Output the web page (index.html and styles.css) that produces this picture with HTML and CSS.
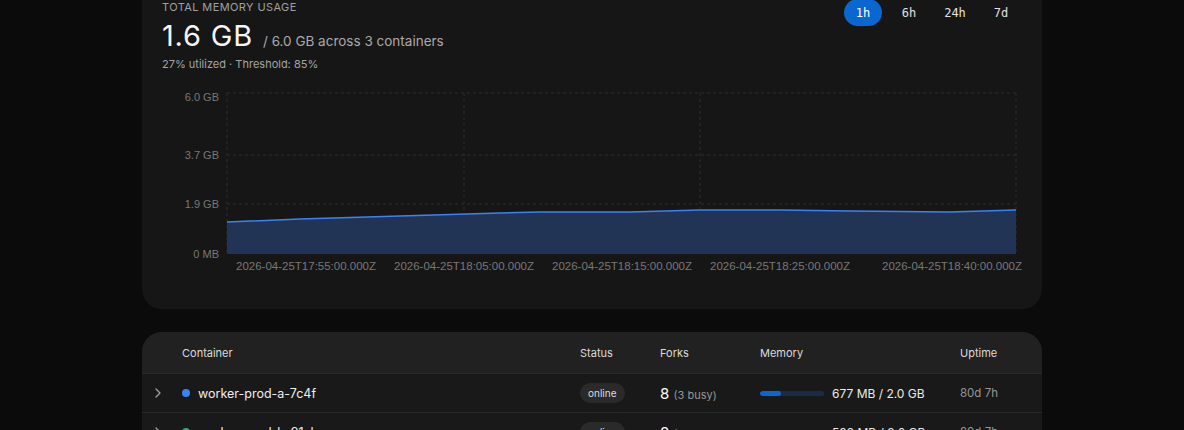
FILE: index.html
```html
<!doctype html>
<html>
	<head>
		<meta charset="utf-8">
		<title>Memory usage</title>
		<link rel="stylesheet" href="styles.css">
	</head>
	<body>
		<div class="page">
			<section class="card usage">
				<div class="usage-head">
					<div>
						<div class="eyebrow">Total memory usage</div>
						<div class="total"><span class="big">1.6 GB</span><span class="of">/ 6.0 GB across 3 containers</span></div>
						<div class="sub">27% utilized · Threshold: 85%</div>
					</div>
					<div class="ranges">
						<button class="range active">1h</button>
						<button class="range">6h</button>
						<button class="range">24h</button>
						<button class="range">7d</button>
					</div>
				</div>
				<svg class="chart" width="856" height="195" viewBox="0 0 856 195">
					<g class="grid">
						<line x1="63" y1="8" x2="852" y2="8" />
						<line x1="63" y1="70" x2="852" y2="70" />
						<line x1="63" y1="119" x2="852" y2="119" />
						<line x1="63" y1="8" x2="63" y2="169" />
						<line x1="300" y1="8" x2="300" y2="169" />
						<line x1="536" y1="8" x2="536" y2="169" />
						<line x1="852" y1="8" x2="852" y2="169" />
					</g>
					<path class="area" d="M63 137 L136 134 L236 131 L336 128 L376 127 L466 127 L536 125 L616 125 L686 126 L786 127 L852 125 L852 169 L63 169 Z" />
					<path class="line" d="M63 137 L136 134 L236 131 L336 128 L376 127 L466 127 L536 125 L616 125 L686 126 L786 127 L852 125" />
					<g class="ylabels">
						<text x="55" y="16">6.0 GB</text>
						<text x="55" y="74">3.7 GB</text>
						<text x="55" y="123">1.9 GB</text>
						<text x="55" y="173">0 MB</text>
					</g>
					<g class="xlabels">
						<text x="142" y="185">2026-04-25T17:55:00.000Z</text>
						<text x="300" y="185">2026-04-25T18:05:00.000Z</text>
						<text x="458" y="185">2026-04-25T18:15:00.000Z</text>
						<text x="616" y="185">2026-04-25T18:25:00.000Z</text>
						<text x="788" y="185">2026-04-25T18:40:00.000Z</text>
					</g>
				</svg>
			</section>

			<section class="card containers">
				<div class="row head">
					<div></div>
					<div>Container</div>
					<div>Status</div>
					<div>Forks</div>
					<div>Memory</div>
					<div>Uptime</div>
				</div>
				<div class="row">
					<div class="chev"><svg width="8" height="10" viewBox="0 0 8 10"><polyline points="2,1 6,5 2,9" /></svg></div>
					<div class="name"><span class="dot blue"></span>worker-prod-a-7c4f</div>
					<div><span class="pill">online</span></div>
					<div class="forks">8 <span>(3 busy)</span></div>
					<div class="mem"><span class="bar"><span class="fill" style="width: 33%"></span></span>677 MB / 2.0 GB</div>
					<div class="uptime">80d 7h</div>
				</div>
				<div class="row">
					<div class="chev"><svg width="8" height="10" viewBox="0 0 8 10"><polyline points="2,1 6,5 2,9" /></svg></div>
					<div class="name"><span class="dot green"></span>worker-prod-b-91ab</div>
					<div><span class="pill">online</span></div>
					<div class="forks">8 <span>(2 busy)</span></div>
					<div class="mem"><span class="bar"><span class="fill" style="width: 28%"></span></span>582 MB / 2.0 GB</div>
					<div class="uptime">80d 7h</div>
				</div>
			</section>
		</div>
	</body>
</html>
```

FILE: styles.css
```css
body {
	margin: 0;
	background-color: rgb(11,11,11);
	font-family: Inter, "Liberation Sans", sans-serif;
	color: rgb(235,235,235);
}

.page {
	width: 900px;
	margin: -21px auto 0;
}

.card {
	border-radius: 20px;
	overflow: hidden;
}

.usage {
	background-color: rgb(22,22,22);
	padding: 21px 22px 29px 20px;
}

.usage-head {
	display: flex;
	justify-content: space-between;
	align-items: flex-start;
}

.eyebrow {
	font-size: 11px;
	line-height: 14px;
	text-transform: uppercase;
	letter-spacing: 0.4px;
	color: rgb(160,160,160);
}

.total {
	display: flex;
	align-items: baseline;
	gap: 10px;
	height: 30px;
	margin-top: 7px;
}

.big {
	font-size: 29px;
	line-height: 30px;
	letter-spacing: 0.8px;
	color: rgb(245,245,245);
}

.of {
	font-size: 13.5px;
	line-height: 30px;
	color: rgb(170,170,170);
}

.sub {
	margin-top: 6px;
	font-size: 11px;
	line-height: 14px;
	color: rgb(165,165,165);
}

.ranges {
	display: flex;
	gap: 8px;
	margin-top: -1px;
}

.range {
	font-family: "DejaVu Sans Mono", monospace;
	font-size: 12px;
	color: rgb(225,225,225);
	background: none;
	border: 0;
	height: 27px;
	min-width: 38px;
	padding: 0 8px;
	border-radius: 14px;
}

.range.active {
	background-color: rgb(10,102,208);
	color: #fff;
}

.chart {
	display: block;
	margin: 14px 0 0 2px;
	overflow: visible;
	font-family: "Liberation Sans", Arial, sans-serif;
}

.grid line {
	stroke: rgb(44,44,44);
	stroke-width: 1;
	stroke-dasharray: 3 3;
}

.area {
	fill: rgb(33,52,85);
}

.line {
	fill: none;
	stroke: rgb(59,130,246);
	stroke-width: 1.5;
}

.ylabels text {
	font-size: 11px;
	fill: rgb(120,120,120);
	text-anchor: end;
}

.xlabels text {
	font-size: 11.5px;
	fill: rgb(120,120,120);
	text-anchor: middle;
}

.containers {
	margin-top: 23px;
	background-color: rgb(25,25,25);
}

.row {
	display: grid;
	grid-template-columns: 40px 398px 80px 100px 200px 1fr;
	align-items: center;
	height: 38px;
	border-top: 1px solid rgb(42,42,42);
	font-size: 12px;
}

.row.head {
	height: 41px;
	border-top: 0;
	background-color: rgb(33,33,33);
	font-size: 11px;
	color: rgb(220,220,220);
}

.chev {
	display: flex;
	align-items: center;
	padding-left: 12px;
}

.chev polyline {
	fill: none;
	stroke: rgb(160,160,160);
	stroke-width: 1.3;
	stroke-linecap: round;
	stroke-linejoin: round;
}

.name {
	display: flex;
	align-items: center;
	gap: 8px;
	font-size: 12.5px;
	color: rgb(238,238,238);
}

.dot {
	width: 8px;
	height: 8px;
	border-radius: 50%;
}

.dot.blue {
	background-color: rgb(59,130,246);
}

.dot.green {
	background-color: rgb(16,185,129);
}

.pill {
	display: inline-block;
	font-size: 10px;
	line-height: 20px;
	padding: 0 8px;
	border-radius: 10px;
	background-color: rgb(42,42,42);
	color: rgb(220,220,220);
}

.forks {
	font-size: 15px;
	color: #fff;
}

.forks span {
	font-size: 11px;
	color: rgb(150,150,150);
}

.mem {
	display: flex;
	align-items: center;
	gap: 8px;
	font-size: 12px;
	color: rgb(235,235,235);
}

.bar {
	width: 64px;
	height: 5px;
	border-radius: 3px;
	background-color: rgb(27,43,68);
	overflow: hidden;
}

.fill {
	display: block;
	height: 100%;
	border-radius: 3px;
	background-color: rgb(10,102,208);
}

.uptime {
	font-size: 11.5px;
	color: rgb(150,150,150);
}
```
